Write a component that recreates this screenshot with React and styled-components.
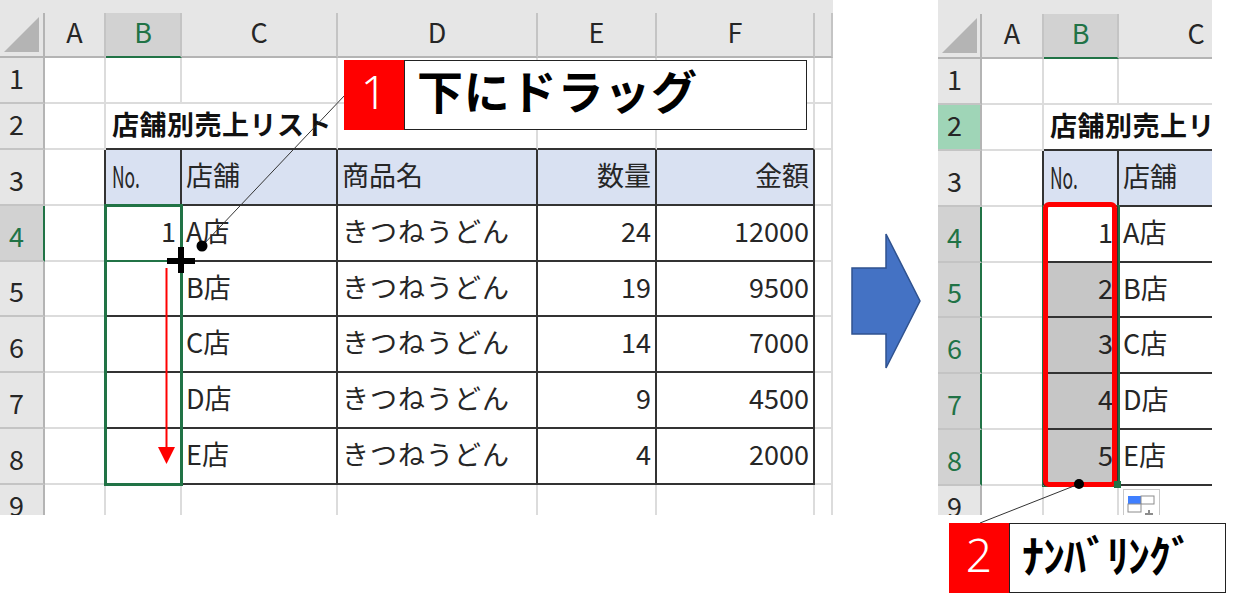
import React from 'react'
import styled, { createGlobalStyle, css } from 'styled-components'

const GlobalStyle = createGlobalStyle`
  html, body {
    margin: 0;
    background: #fff;
  }
  body {
    font-family: "Noto Sans CJK JP", "Noto Sans", sans-serif;
    color: #262626;
  }
`

// every sheet part names its own grid slot, so the selection can share cells with them
const slot = css`
  grid-column: ${(p) => p.$col};
  grid-row: ${(p) => p.$row};
`

const Stage = styled.div`
  position: relative;
  display: flex;
  align-items: flex-start;
  width: 1240px;
  height: 615px;
  overflow: hidden;
`

const SheetGrid = styled.div`
  display: grid;
  flex: none;
  width: ${(p) => p.$width}px;
  height: 515px;
  overflow: hidden;
  grid-template-columns: ${(p) => p.$columns};
  grid-template-rows: ${(p) => p.$band}px 45px 46px 46px 56px 56px 55px 56px 56px 56px 46px;
  font-size: 27px;
  line-height: 1;
`

const Band = styled.div`
  grid-column: 1 / -1;
  grid-row: 1;
  background: #e6e6e6;
`

const Corner = styled.div`
  grid-column: 1;
  grid-row: 2;
  display: flex;
  align-items: flex-end;
  padding: 0 0 3px 4px;
  background: #e6e6e6;
  border-right: 2px solid #b4b4b4;
  border-bottom: 2px solid #b4b4b4;
`

const ColHead = styled.div`
  ${slot}
  display: flex;
  align-items: center;
  justify-content: center;
  padding-bottom: 6px;
  box-sizing: border-box;
  background: ${(p) => (p.$active ? '#d2d2d2' : '#e6e6e6')};
  color: ${(p) => (p.$active ? '#217346' : '#262626')};
  border-right: 2px solid #c4c4c4;
  border-bottom: 2px solid ${(p) => (p.$active ? '#217346' : '#b4b4b4')};
`

const rowHeadFill = { idle: '#e6e6e6', selected: '#d2d2d2', cursor: '#9fd5b7' }

const RowHead = styled.div`
  ${slot}
  display: flex;
  align-items: ${(p) => (p.$tall ? 'flex-end' : 'center')};
  padding: 0 0 ${(p) => (p.$tall ? '11px' : '5px')} 9px;
  box-sizing: border-box;
  background: ${(p) => rowHeadFill[p.$state]};
  color: ${(p) => (p.$state === 'selected' ? '#217346' : '#262626')};
  border-right: 2px solid ${(p) => (p.$state === 'selected' ? '#217346' : '#b4b4b4')};
  border-bottom: 2px solid #c4c4c4;
`

const Cell = styled.div`
  ${slot}
  display: flex;
  align-items: center;
  justify-content: ${(p) => (p.$right ? 'flex-end' : 'flex-start')};
  padding: 0 4px 5px 4px;
  box-sizing: border-box;
  min-width: 0;
  white-space: nowrap;
  background: ${(p) => p.$fill || '#fff'};
  border-right: 2px solid ${(p) => p.$ruleRight};
  border-bottom: 2px solid ${(p) => p.$ruleBottom};
`

const TitleCell = styled(Cell)`
  grid-column: ${(p) => p.$col} / span 2;
  padding-left: 6px;
  font-weight: 700;
  letter-spacing: 0.5px;
  color: #111;
`

const Narrow = styled.span`
  display: inline-block;
  margin-left: 2px;
  font-size: 30px;
  transform: scaleX(0.58);
  transform-origin: left center;
`

const Kana = styled.span`
  letter-spacing: 1px;
`

const Selection = styled.div`
  grid-column: 3;
  grid-row: 6 / span 5;
  margin: -2px -1px 0 -2px;
  height: 282px;
  box-sizing: border-box;
  border: ${(p) => (p.$thin ? '1px' : '3px')} solid #217346;
  ${(p) => p.$thin && 'border-right-width: 2px;'}
  z-index: 1;
`

const RedFrame = styled.div`
  grid-column: 3;
  grid-row: 6 / span 5;
  margin: -5px 2px 0 -1px;
  height: 285px;
  box-sizing: border-box;
  border: 5px solid #ff0000;
  border-radius: 6px;
  z-index: 2;
`

const FillHandle = styled.div`
  grid-column: 3;
  grid-row: 10;
  align-self: end;
  justify-self: end;
  width: 7px;
  height: 7px;
  margin: 0 -2px -2px 0;
  background: #217346;
  z-index: 2;
`

const AutoFillSlot = styled.div`
  grid-column: 4;
  grid-row: 11;
  margin: 3px 0 0 4px;
  width: 37px;
  height: 53px;
  z-index: 1;
`

const BlueArrow = styled.svg`
  flex: none;
  width: 70px;
  height: 138px;
  margin: 232px 17px 0 18px;
`

const Annotations = styled.svg`
  position: absolute;
  inset: 0;
  width: 1240px;
  height: 615px;
  z-index: 3;
  pointer-events: none;
`

const Callout = styled.div`
  position: absolute;
  left: ${(p) => p.$left}px;
  top: ${(p) => p.$top}px;
  display: flex;
  height: 70px;
  z-index: 4;
`

const Badge = styled.div`
  display: flex;
  align-items: center;
  justify-content: center;
  width: ${(p) => p.$width}px;
  padding-bottom: 8px;
  box-sizing: border-box;
  background: #ff0000;
  color: #fff;
  font-family: "Noto Sans", sans-serif;
  font-weight: 300;
  font-size: 46px;
  line-height: 1;
`

const CalloutBox = styled.div`
  display: flex;
  align-items: center;
  box-sizing: border-box;
  width: ${(p) => p.$width}px;
  padding: 0 0 ${(p) => p.$lift}px ${(p) => p.$pad}px;
  background: #fff;
  border: 1px solid #222;
  color: #000;
  font-weight: 700;
  font-size: ${(p) => p.$size}px;
  letter-spacing: ${(p) => p.$spacing}px;
  line-height: 1;
  white-space: nowrap;
`

const LETTERS = ['A', 'B', 'C', 'D', 'E', 'F', '']
const TABLE = [
  ['No.', '店舗', '商品名', '数量', '金額'],
  ['1', 'A店', 'きつねうどん', '24', '12000'],
  ['2', 'B店', 'きつねうどん', '19', '9500'],
  ['3', 'C店', 'きつねうどん', '14', '7000'],
  ['4', 'D店', 'きつねうどん', '9', '4500'],
  ['5', 'E店', 'きつねうどん', '4', '2000'],
]
const DARK = '#333'
const LIGHT = '#dcdcdc'

const cellContent = (text) => {
  if (text === 'No.') return <Narrow>{text}</Narrow>
  if (text === 'きつねうどん') return <Kana>{text}</Kana>
  return text
}

const SheetBody = ({ colCount, filled, cursorRow }) => {
  const out = []
  for (let r = 1; r <= 9; r++) {
    const gridRow = r + 2
    let state = 'idle'
    if (filled ? r >= 4 && r <= 8 : r === 4) state = 'selected'
    if (r === cursorRow) state = 'cursor'
    out.push(
      <RowHead key={`h${r}`} $col={1} $row={gridRow} $state={state} $tall={r >= 3 && r <= 8}>
        {r}
      </RowHead>
    )
    for (let c = 0; c < colCount; c++) {
      const gridCol = c + 2
      if (r === 2 && c === 1) {
        out.push(
          <TitleCell key="title" $col={gridCol} $row={gridRow} $ruleRight={LIGHT} $ruleBottom={DARK}>
            店舗別売上リスト
          </TitleCell>
        )
        continue
      }
      if (r === 2 && c === 2) continue
      const inTable = r >= 3 && r <= 8
      const right = inTable && c <= 5 ? DARK : LIGHT
      let bottom = c >= 1 && c <= 5 && r >= 2 && r <= 8 ? DARK : LIGHT
      // the row under the active cell carries the green edge of the selection
      if (!filled && c === 1 && r === 4) bottom = '#217346'
      let text = ''
      if (inTable && c >= 1 && c <= 5) text = TABLE[r - 3][c - 1]
      if (!filled && c === 1 && r > 4) text = ''
      const alignRight = c === 4 || c === 5 || (c === 1 && r > 3)
      const fill = r === 3 && c >= 1 && c <= 5 ? '#d9e1f2' : filled && c === 1 && r > 4 && r <= 8 ? '#c6c6c6' : null
      out.push(
        <Cell key={`${r}-${c}`} $col={gridCol} $row={gridRow} $right={alignRight} $fill={fill} $ruleRight={right} $ruleBottom={bottom}>
          {cellContent(text)}
        </Cell>
      )
    }
  }
  return out
}

const AutoFillIcon = () => (
  <svg width="37" height="53" viewBox="0 0 37 53">
    <rect x="0.5" y="0.5" width="36" height="52" fill="#fff" stroke="#c8c8c8" />
    <rect x="5" y="7" width="13" height="8" fill="#3f7fff" />
    <rect x="18" y="7" width="13" height="8" fill="#fff" stroke="#8c8c8c" />
    <rect x="5" y="15" width="13" height="8" fill="#fff" stroke="#8c8c8c" />
    <path d="M26 21v8M22 25h8" stroke="#8c8c8c" strokeWidth="2" />
  </svg>
)

export default function App() {
  return (
    <>
      <GlobalStyle />
      <Stage>
        <SheetGrid $width={833} $band={13} $columns="45px 61px 76px 156px 200px 119px 158px 18px">
          <Band />
          <Corner>
            <svg width="36" height="36" viewBox="0 0 36 36">
              <path d="M0 35L35 0V35Z" fill="#b4b4b4" />
            </svg>
          </Corner>
          {LETTERS.map((l, i) => (
            <ColHead key={i} $col={i + 2} $row={2} $active={l === 'B'}>
              {l}
            </ColHead>
          ))}
          <SheetBody colCount={7} filled={false} />
          <Selection />
        </SheetGrid>

        <BlueArrow viewBox="0 0 70 138">
          <path d="M1 36H35V2L69 69L35 136V102H1Z" fill="#4472c4" stroke="#2f528f" strokeWidth="1.5" />
        </BlueArrow>

        <SheetGrid $width={274} $band={14} $columns="44px 62px 75px 156px">
          <Band />
          <Corner>
            <svg width="36" height="36" viewBox="0 0 36 36">
              <path d="M0 35L35 0V35Z" fill="#b4b4b4" />
            </svg>
          </Corner>
          {LETTERS.slice(0, 3).map((l, i) => (
            <ColHead key={i} $col={i + 2} $row={2} $active={l === 'B'}>
              {l}
            </ColHead>
          ))}
          <SheetBody colCount={3} filled cursorRow={2} />
          <Selection $thin />
          <RedFrame />
          <FillHandle />
          <AutoFillSlot>
            <AutoFillIcon />
          </AutoFillSlot>
        </SheetGrid>

        <Annotations viewBox="0 0 1240 615">
          <line x1="345" y1="95" x2="202" y2="246" stroke="#333" strokeWidth="1" />
          <circle cx="202" cy="246" r="5.5" fill="#000" />
          <path d="M167 261H195M181 247V273" stroke="#000" strokeWidth="6" fill="none" />
          <line x1="166.5" y1="268" x2="166.5" y2="450" stroke="#ff0000" strokeWidth="2" />
          <path d="M158 447H175L166.5 464Z" fill="#ff0000" />
          <line x1="980" y1="523" x2="1079" y2="484" stroke="#333" strokeWidth="1" />
          <circle cx="1079" cy="484" r="5" fill="#000" />
        </Annotations>

        <Callout $left={344} $top={60}>
          <Badge $width={60}>1</Badge>
          <CalloutBox $width={403} $pad={12} $lift={12} $size={46} $spacing={0.8}>
            下にドラッグ
          </CalloutBox>
        </Callout>

        <Callout $left={949} $top={523}>
          <Badge $width={60}>2</Badge>
          <CalloutBox $width={217} $pad={12} $lift={8} $size={44} $spacing={-1}>
            ﾅﾝﾊﾞﾘﾝｸﾞ
          </CalloutBox>
        </Callout>
      </Stage>
    </>
  )
}
